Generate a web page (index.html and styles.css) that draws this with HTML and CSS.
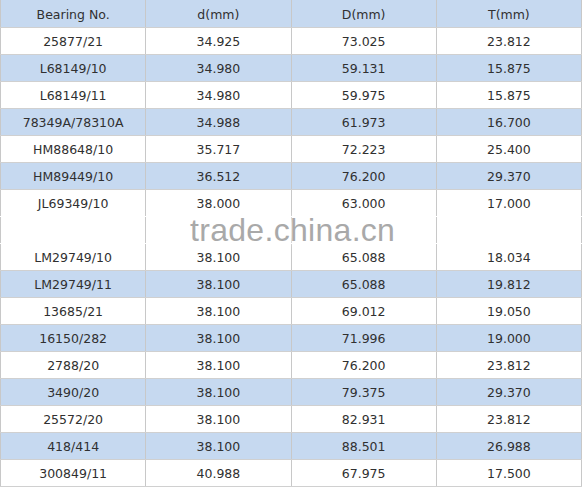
FILE: index.html
```html
<!DOCTYPE html>
<html>
<head>
<meta charset="utf-8">
<link rel="stylesheet" href="styles.css">
</head>
<body>
<div class="wrap">
<table class="specs">
<thead>
<tr class="blue"><th>Bearing No.</th><th>d(mm)</th><th>D(mm)</th><th>T(mm)</th></tr>
</thead>
<tbody>
<tr><td>25877/21</td><td>34.925</td><td>73.025</td><td>23.812</td></tr>
<tr class="blue"><td>L68149/10</td><td>34.980</td><td>59.131</td><td>15.875</td></tr>
<tr><td>L68149/11</td><td>34.980</td><td>59.975</td><td>15.875</td></tr>
<tr class="blue"><td>78349A/78310A</td><td>34.988</td><td>61.973</td><td>16.700</td></tr>
<tr><td>HM88648/10</td><td>35.717</td><td>72.223</td><td>25.400</td></tr>
<tr class="blue"><td>HM89449/10</td><td>36.512</td><td>76.200</td><td>29.370</td></tr>
<tr class="pre-blank"><td>JL69349/10</td><td>38.000</td><td>63.000</td><td>17.000</td></tr>
<tr class="blank"><td></td><td></td><td></td><td></td></tr>
<tr><td>LM29749/10</td><td>38.100</td><td>65.088</td><td>18.034</td></tr>
<tr class="blue"><td>LM29749/11</td><td>38.100</td><td>65.088</td><td>19.812</td></tr>
<tr><td>13685/21</td><td>38.100</td><td>69.012</td><td>19.050</td></tr>
<tr class="blue"><td>16150/282</td><td>38.100</td><td>71.996</td><td>19.000</td></tr>
<tr><td>2788/20</td><td>38.100</td><td>76.200</td><td>23.812</td></tr>
<tr class="blue"><td>3490/20</td><td>38.100</td><td>79.375</td><td>29.370</td></tr>
<tr><td>25572/20</td><td>38.100</td><td>82.931</td><td>23.812</td></tr>
<tr class="blue"><td>418/414</td><td>38.100</td><td>88.501</td><td>26.988</td></tr>
<tr><td>300849/11</td><td>40.988</td><td>67.975</td><td>17.500</td></tr>
</tbody>
</table>
<div class="watermark">trade.china.cn</div>
</div>
</body>
</html>
```

FILE: styles.css
```css
html, body {
  margin: 0;
  padding: 0;
  background: #ffffff;
}

.wrap {
  position: relative;
  width: 582px;
  height: 488px;
  overflow: hidden;
}

.specs {
  width: 582px;
  border-collapse: collapse;
  table-layout: fixed;
  font-family: "DejaVu Sans", Verdana, sans-serif;
  font-size: 12.5px;
  color: #303030;
}

.specs th,
.specs td {
  height: 26px;
  padding: 0;
  text-align: center;
  vertical-align: middle;
  font-weight: normal;
  border-left: 1px solid #c8c8c8;
  border-right: 1px solid #c8c8c8;
  border-bottom: 1px solid #d0d0d0;
  border-top: 0;
}

.specs th {
  height: 26px;
  padding-top: 1px;
}

.specs .blue th,
.specs .blue td {
  background: #c6d9f0;
}

.specs .pre-blank td {
  border-bottom-color: #ffffff;
  vertical-align: top;
  padding-top: 7px;
  height: 19px;
  line-height: 14px;
}

.specs .blank td {
  border-bottom-color: #ffffff;
}

.watermark {
  position: absolute;
  left: 190px;
  top: 218px;
  font-family: "Liberation Sans", Arial, sans-serif;
  font-size: 32px;
  line-height: 24px;
  letter-spacing: 0.3px;
  color: #a9a9a9;
  text-shadow: 0 0 6px #ffffff, 0 0 10px #ffffff, 0 0 14px #ffffff;
  white-space: nowrap;
}
```
